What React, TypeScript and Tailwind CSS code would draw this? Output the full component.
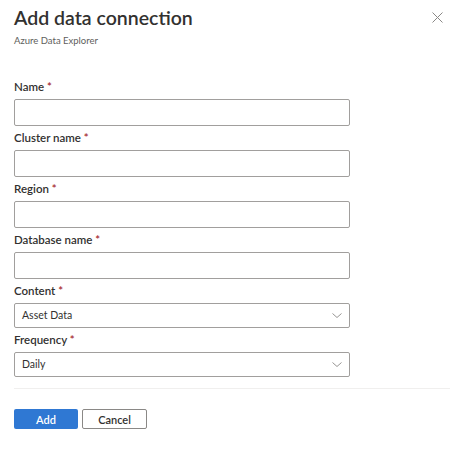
const fields = ['Name', 'Cluster name', 'Region', 'Database name'];

const selects = [
  { label: 'Content', value: 'Asset Data' },
  { label: 'Frequency', value: 'Daily' },
];

const Label = ({ text }: { text: string }) => (
  <div className="h-[24px] leading-[24px] text-[11.5px] font-semibold text-[#323130]">
    {text} <span className="text-[#a4262c]">*</span>
  </div>
);

const App = () => {
  return (
    <div
      className="w-[460px] h-[463px] bg-white relative"
      style={{ fontFamily: 'Lato, "Open Sans", sans-serif' }}
    >
      <div className="px-[14px] pt-[4px]">
        <div className="text-[19.5px] font-semibold text-[#323130] leading-[28px]">
          Add data connection
        </div>
        <div className="text-[9.5px] text-[#605e5c] leading-[14px] mt-[2px]">
          Azure Data Explorer
        </div>
      </div>
      <button className="absolute left-[432px] top-[12px]">
        <svg width="11" height="11" viewBox="0 0 11 11" fill="none" stroke="#8a8886" strokeWidth="1">
          <path d="M0.5 0.5 L10.5 10.5 M10.5 0.5 L0.5 10.5" />
        </svg>
      </button>

      <div className="px-[14px] pt-[27px] w-[364px]">
        {fields.map((f) => (
          <div key={f}>
            <Label text={f} />
            <div className="h-[27px] border border-[#a19f9d] rounded-[2px]" />
          </div>
        ))}
        {selects.map((s) => (
          <div key={s.label}>
            <Label text={s.label} />
            <div className="h-[25px] border border-[#a19f9d] rounded-[2px] flex items-center justify-between pl-[7px] pr-[7px]">
              <span className="text-[10.5px] text-[#323130]">{s.value}</span>
              <svg width="10" height="5" viewBox="0 0 10 5" fill="none" stroke="#8a8886" strokeWidth="0.9">
                <path d="M0.5 0.5 L5 4.5 L9.5 0.5" />
              </svg>
            </div>
          </div>
        ))}
      </div>

      <div className="mx-[14px] mt-[11px] w-[436px] border-t border-[#f0efee]" />

      <div className="px-[14px] pt-[20px] flex gap-[4px]">
        <button className="w-[64px] h-[20px] bg-[#2f78d3] rounded-[2px] text-white text-[11px] font-semibold leading-none">
          Add
        </button>
        <button className="w-[65px] h-[20px] border border-[#8a8886] rounded-[2px] text-[#323130] text-[11px] font-semibold leading-none">
          Cancel
        </button>
      </div>
    </div>
  );
};

export default App;
